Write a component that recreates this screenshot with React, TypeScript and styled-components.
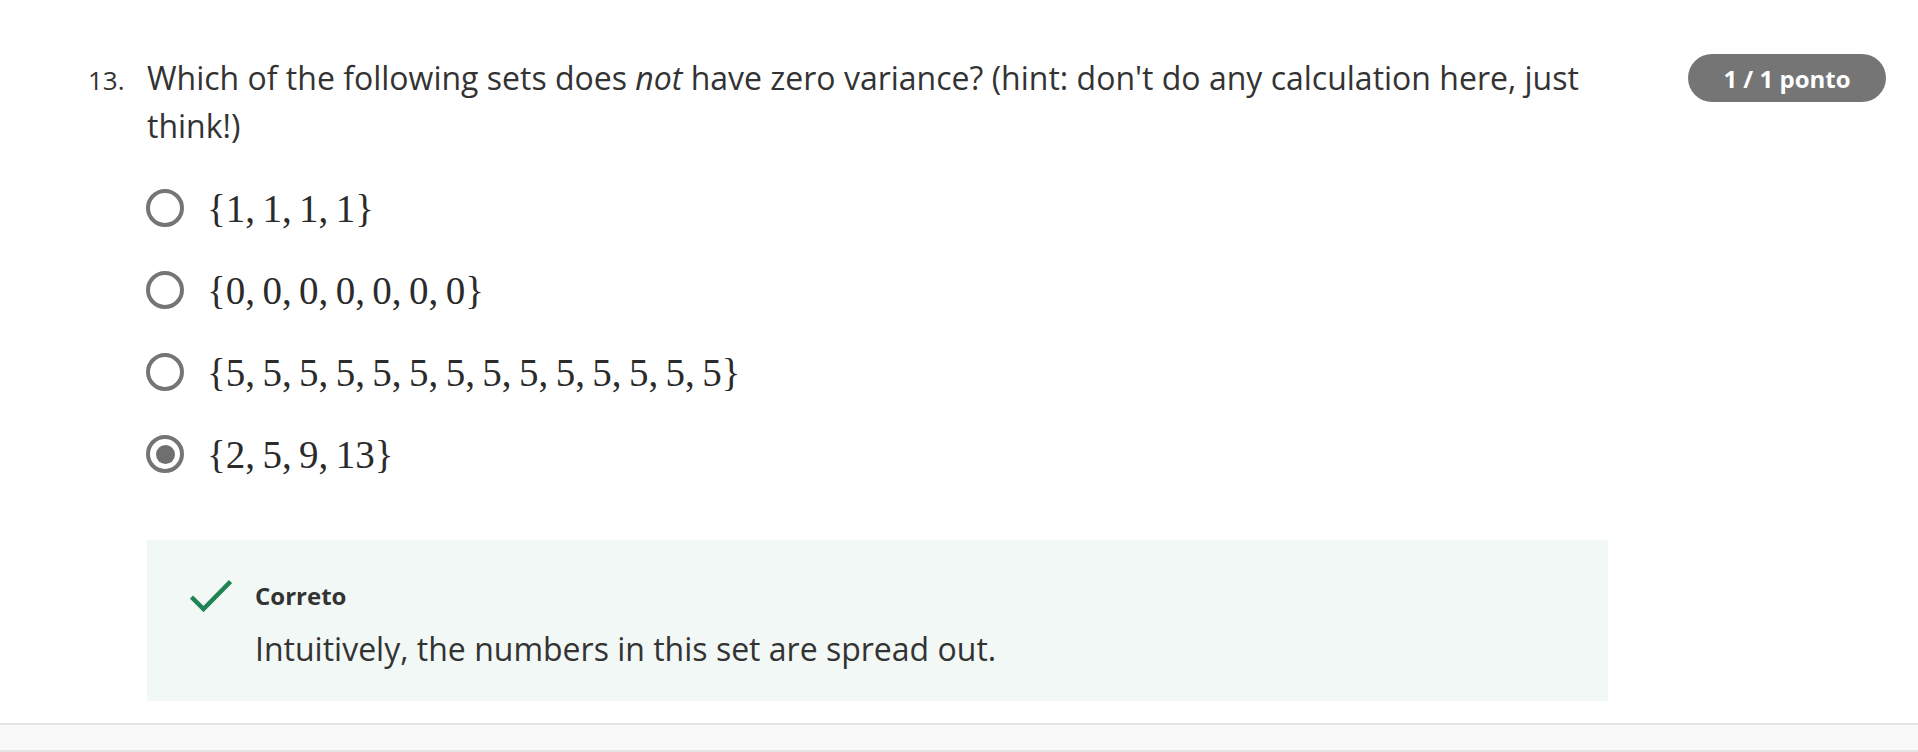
import React from "react";
import styled, { createGlobalStyle } from "styled-components";

const GlobalStyle = createGlobalStyle`
  html, body {
    margin: 0;
    padding: 0;
    background: #ffffff;
  }
  body {
    font-family: "Open Sans", "Liberation Sans", sans-serif;
    color: #333333;
  }
`;

const Page = styled.div`
  width: 1918px;
  height: 752px;
  overflow: hidden;
  display: flex;
  flex-direction: column;
`;

const Question = styled.div`
  display: flex;
  align-items: flex-start;
  padding: 54px 32px 0 88px;
  gap: 80px;
`;

const Main = styled.div`
  width: 1520px;
  display: flex;
  flex-direction: column;
`;

const Header = styled.div`
  display: flex;
  align-items: baseline;
`;

const Number = styled.span`
  width: 59px;
  flex: none;
  font-size: 26px;
  line-height: 48px;
  color: #333333;
`;

const Prompt = styled.div`
  flex: 1;
  font-size: 32px;
  line-height: 48px;
  color: #333333;
  em {
    font-style: italic;
  }
`;

const Indented = styled.div`
  margin-left: 59px;
  display: flex;
  flex-direction: column;
`;

const Options = styled.div`
  margin-top: 17px;
  display: flex;
  flex-direction: column;
`;

const OptionRow = styled.label`
  height: 82px;
  display: flex;
  align-items: center;
  gap: 23px;
  cursor: pointer;
`;

const Radio = styled.span<{ $checked?: boolean }>`
  box-sizing: border-box;
  width: 38px;
  height: 38px;
  flex: none;
  border-radius: 50%;
  border: 4px solid #757575;
  margin-left: -1px;
  display: flex;
  align-items: center;
  justify-content: center;
  &::after {
    content: "";
    display: ${(p) => (p.$checked ? "block" : "none")};
    width: 19px;
    height: 19px;
    border-radius: 50%;
    background: #6f6f6f;
  }
`;

const MathSet = styled.span`
  font-family: "Liberation Serif", "DejaVu Serif", serif;
  font-size: 39px;
  line-height: 48px;
  color: #2b2b2b;
  white-space: nowrap;
  margin-top: 2px;
`;

const Comma = styled.span`
  margin-right: 0.19em;
`;

const Badge = styled.div`
  flex: none;
  width: 198px;
  height: 48px;
  border-radius: 24px;
  background: #757575;
  color: #ffffff;
  font-weight: 700;
  font-size: 24px;
  display: flex;
  align-items: center;
  justify-content: center;
`;

const Feedback = styled.div`
  margin-top: 45px;
  width: 1461px;
  height: 161px;
  box-sizing: border-box;
  background: #f2f8f5;
  padding: 39px 44px 28px 43px;
  display: grid;
  grid-template-columns: 42px 1fr;
  column-gap: 23px;
  align-items: center;
`;

const CheckIcon = styled.svg`
  display: block;
  width: 42px;
  height: 33px;
`;

const Label = styled.div`
  font-weight: 700;
  font-size: 24px;
  line-height: 32px;
  color: #333333;
`;

const Explanation = styled.div`
  grid-column: 2;
  margin-top: 13px;
  font-size: 32px;
  line-height: 48px;
  color: #333333;
`;

const NextBand = styled.div`
  margin-top: 22px;
  height: 26px;
  background: #f9f9f9;
  border-top: 2px solid #e5e5e5;
  border-bottom: 2px solid #e5e5e5;
`;

const MathSetView: React.FC<{ items: string[] }> = ({ items }) => (
  <MathSet>
    {"{"}
    {items.map((it, i) => (
      <React.Fragment key={i}>
        {it}
        {i < items.length - 1 && <Comma>,</Comma>}
      </React.Fragment>
    ))}
    {"}"}
  </MathSet>
);

const options: { items: string[]; checked?: boolean }[] = [
  { items: ["1", "1", "1", "1"] },
  { items: ["0", "0", "0", "0", "0", "0", "0"] },
  { items: Array.from({ length: 14 }, () => "5") },
  { items: ["2", "5", "9", "13"], checked: true },
];

export default function App() {
  return (
    <>
      <GlobalStyle />
      <Page>
        <Question>
          <Main>
            <Header>
              <Number>13.</Number>
              <Prompt>
                Which of the following sets does <em>not</em> have zero variance? (hint: don't do any
                calculation here, just think!)
              </Prompt>
            </Header>
            <Indented>
              <Options>
                {options.map((o, i) => (
                  <OptionRow key={i}>
                    <Radio $checked={o.checked} />
                    <MathSetView items={o.items} />
                  </OptionRow>
                ))}
              </Options>
              <Feedback>
                <CheckIcon viewBox="0 0 42 33" fill="none">
                  <polyline
                    points="1.5,18 13.5,30 40.5,2.5"
                    stroke="#1f8354"
                    strokeWidth="4.5"
                  />
                </CheckIcon>
                <Label>Correto</Label>
                <Explanation>Intuitively, the numbers in this set are spread out.</Explanation>
              </Feedback>
            </Indented>
          </Main>
          <Badge>1 / 1 ponto</Badge>
        </Question>
        <NextBand />
      </Page>
    </>
  );
}
